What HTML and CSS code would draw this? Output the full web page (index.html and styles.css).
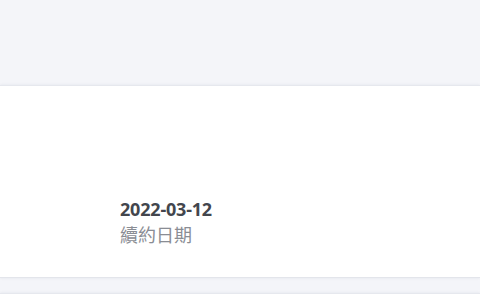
FILE: index.html
```html
<!DOCTYPE html>
<html lang="zh-Hant">
<head>
<meta charset="utf-8">
<link rel="stylesheet" href="styles.css">
</head>
<body>
<div class="page">
  <div class="header"></div>
  <section class="card">
    <div class="stat">
      <div class="value">2022-03-12</div>
      <div class="label">續約日期</div>
    </div>
  </section>
  <section class="card next"></section>
</div>
</body>
</html>
```
FILE: styles.css
```css
html, body {
  margin: 0;
  padding: 0;
  background: #f4f5f9;
  font-family: "Noto Sans", "Noto Sans CJK TC", sans-serif;
}
.page {
  display: flex;
  flex-direction: column;
  width: 480px;
  height: 300px;
  overflow: hidden;
}
.header {
  height: 85px;
  flex: none;
}
.card {
  flex: none;
  background: #ffffff;
  border-top: 1px solid #e6e8ee;
  border-bottom: 1px solid #e3e5eb;
  box-shadow: 0 0 3px rgba(30, 40, 80, 0.08);
  height: 193px;
  box-sizing: border-box;
  padding: 112px 0 0 120px;
}
.card.next {
  margin-top: 15px;
  height: 40px;
  padding: 0;
}
.stat {
  display: flex;
  flex-direction: column;
}
.value {
  font-size: 18px;
  font-weight: 700;
  color: #43464d;
  line-height: 22px;
  letter-spacing: -0.2px;
}
.label {
  font-size: 18px;
  color: #8a8d94;
  line-height: 24px;
  margin-top: 2px;
  font-family: "Noto Sans CJK TC", sans-serif;
}
```
